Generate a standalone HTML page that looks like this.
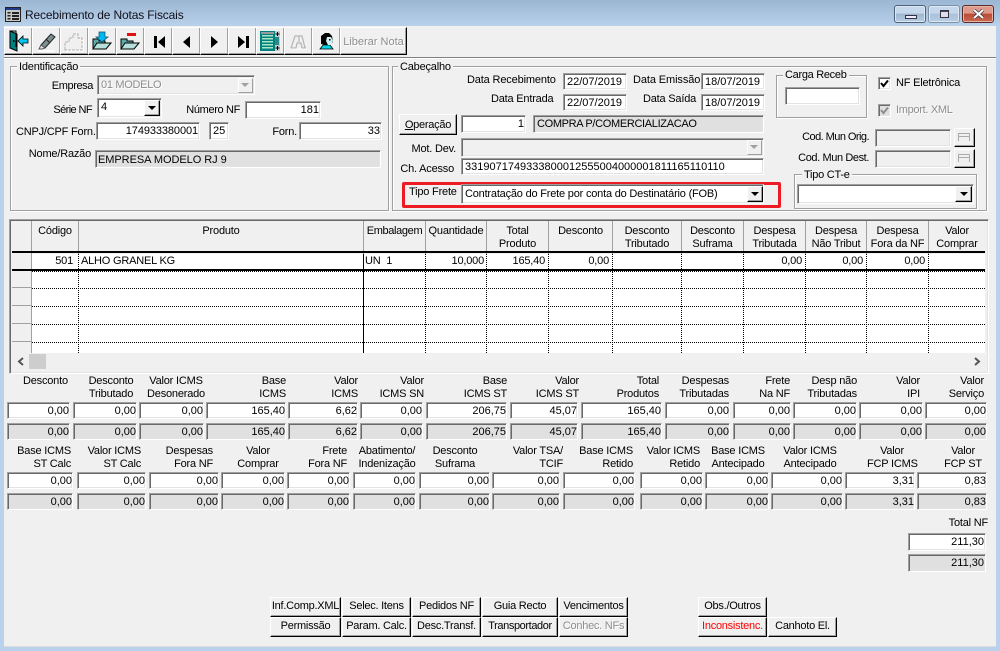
<!DOCTYPE html>
<html><head><meta charset="utf-8"><style>
html,body{margin:0;padding:0}
body{width:1000px;height:651px;position:relative;overflow:hidden;background:#b9d1ea;font-family:"Liberation Sans",sans-serif;font-size:11px;color:#000;letter-spacing:-.2px}
div,svg{position:absolute;box-sizing:border-box}
.t{white-space:nowrap;line-height:13px;margin-top:1px}
.r{text-align:right}.c{text-align:center}
.i,.g{white-space:nowrap;text-align:right;background:#fff;border:1px solid;border-color:#a0a0a0 #fff #fff #a0a0a0;box-shadow:inset 1px 1px 0 #696969,inset -1px -1px 0 #e3e3e3;padding:1px 0 0 2px;line-height:14px;overflow:hidden;letter-spacing:0}
.g{background:#e0e0e0}
.L{text-align:left;padding-left:3px}
.b{background:#f0f0f0;border:1px solid;border-color:#fff #000 #000 #fff;box-shadow:inset -1px -1px 0 #a0a0a0;text-align:center;line-height:17px;white-space:nowrap;letter-spacing:-.25px}
.gb{border:1px solid #a0a0a0;box-shadow:1px 1px 0 #fff,inset 1px 1px 0 #fff}
.lg{background:#f0f0f0;padding:0 2px}
.dis{color:#8d8d8d;text-shadow:1px 1px 0 #fff}
.tri{width:0;height:0;border-left:4px solid transparent;border-right:4px solid transparent;border-top:4px solid #000;left:3px;top:5px}
</style></head><body>
<div style="left:0;top:0;width:1000px;height:26px;background:linear-gradient(#9bb6d3,#b9d1ea)"></div>
<svg style="left:5px;top:7px" width="16" height="15" viewBox="0 0 16 15"><rect x=".5" y=".5" width="15" height="14" fill="#c8c8c8" stroke="#222"/><rect x="1" y="1" width="14" height="2" fill="#223a88"/><rect x="2.5" y="5" width="3" height="1.5" fill="#222"/><rect x="2.5" y="8" width="3" height="1.5" fill="#222"/><rect x="2.5" y="11" width="3" height="1.5" fill="#222"/><rect x="7" y="5" width="7" height="2" fill="#222"/><rect x="7" y="8" width="7" height="2" fill="#222"/><rect x="7" y="11" width="7" height="2" fill="#222"/></svg>
<div class="t" style="left:25px;top:8px;font-size:12px;color:#10101a;letter-spacing:-.15px">Recebimento de Notas Fiscais</div>
<div style="left:894px;top:5px;width:32px;height:18px;border:1px solid #4d6078;border-radius:3px;background:linear-gradient(#c5d7ea 45%,#9db6d0 50%,#b7cde3);box-shadow:inset 0 0 0 1px #dde8f3"><div style="left:10px;top:9px;width:12px;height:4px;background:#eef;border:1px solid #334"></div></div>
<div style="left:928px;top:5px;width:32px;height:18px;border:1px solid #7b92ab;border-radius:3px;background:linear-gradient(#c5d7ea 45%,#a9c1da 50%,#b7cde3);box-shadow:inset 0 0 0 1px #dde8f3"><div style="left:11px;top:4px;width:9px;height:8px;background:#dde;border:1px solid #334;box-shadow:inset 0 1px 0 #445"></div></div>
<div style="left:962px;top:5px;width:32px;height:18px;border:1px solid #5b2a22;border-radius:3px;background:linear-gradient(#dd9a8a 45%,#bb4a35 50%,#c96a52);box-shadow:inset 0 0 0 1px #e4b5a8"><svg style="left:9px;top:3px" width="13" height="10" viewBox="0 0 13 10"><path d="M2 1L11 9M11 1L2 9" stroke="#334" stroke-width="3.4"/><path d="M2 1L11 9M11 1L2 9" stroke="#fff" stroke-width="2"/></svg></div>

<div style="left:4px;top:26px;width:992px;height:620px;background:#f0f0f0"></div>
<div style="left:4px;top:57px;width:992px;height:2px;background:#808080;border-bottom:1px solid #fff"></div>
<div style="left:4px;top:646px;width:992px;height:1px;background:#dcdcdc"></div>

<div class="b" style="left:4px;top:27px;width:29px;height:28px"></div>
<div class="b" style="left:32px;top:27px;width:29px;height:28px"></div>
<div class="b" style="left:60px;top:27px;width:29px;height:28px"></div>
<div class="b" style="left:88px;top:27px;width:29px;height:28px"></div>
<div class="b" style="left:116px;top:27px;width:29px;height:28px"></div>
<div class="b" style="left:144px;top:27px;width:29px;height:28px"></div>
<div class="b" style="left:172px;top:27px;width:29px;height:28px"></div>
<div class="b" style="left:200px;top:27px;width:29px;height:28px"></div>
<div class="b" style="left:228px;top:27px;width:29px;height:28px"></div>
<div class="b" style="left:256px;top:27px;width:29px;height:28px"></div>
<div class="b" style="left:284px;top:27px;width:29px;height:28px"></div>
<div class="b" style="left:312px;top:27px;width:29px;height:28px"></div>
<div class="b dis" style="left:340px;top:27px;width:67px;height:28px;line-height:28px;letter-spacing:0">Liberar Nota</div>

<svg style="left:0;top:0" width="420" height="60">
<path d="M10 31L17 34V51L10 48Z" fill="#008080" stroke="#000"/><path d="M10 31H16V34" fill="none" stroke="#000"/><path d="M16 34V47" stroke="#000"/><rect x="13" y="40" width="1.5" height="2" fill="#000"/>
<path d="M18 41L23 36V39H28V43H23V46Z" fill="#00c8f0" stroke="#000" stroke-width=".8"/>
<path d="M41 45L51 34L55 37L45 48Z" fill="#7d8e8e" stroke="#222"/><path d="M46 39L50 43" stroke="#222"/><path d="M41 45L45 48L42 49H39Z" fill="#e8e8e8" stroke="#555"/><path d="M38 51H55" stroke="#fff" stroke-width="1.5"/>
<path d="M65 50V42H69V38H73V34H78V38H82V50Z" fill="none" stroke="#b0b0b0" stroke-dasharray="3 1"/><path d="M66 51H83V39" fill="none" stroke="#fff"/>
<path d="M93 49V39H99V41H105V49Z" fill="#5ea8a8" stroke="#000"/><path d="M93 49L97 43H111L106 49Z" fill="#b5e0dc" stroke="#000"/><path d="M99 32H105V37H108L102 42L96 37H99Z" fill="#00b8f0" stroke="#0a4a66" stroke-width=".7"/>
<path d="M121 49V39H127V41H133V49Z" fill="#5ea8a8" stroke="#000"/><path d="M121 49L125 43H139L134 49Z" fill="#b5e0dc" stroke="#000"/><rect x="127" y="33" width="9" height="3" fill="#e01010"/>
<rect x="154" y="36" width="3" height="12" fill="#000"/><path d="M165 36V48L158 42Z" fill="#000"/>
<path d="M190 36V48L183 42Z" fill="#000"/>
<path d="M211 36V48L218 42Z" fill="#000"/>
<path d="M238 36V48L245 42Z" fill="#000"/><rect x="246" y="36" width="3" height="12" fill="#000"/>
<rect x="260" y="31" width="20" height="20" fill="#008080"/><rect x="261" y="32" width="13" height="2" fill="#9a9a9a"/><g fill="#a8e8c0"><rect x="262" y="35" width="11" height="1.5"/><rect x="262" y="38" width="11" height="1.5"/><rect x="262" y="41" width="11" height="1.5"/><rect x="262" y="44" width="11" height="1.5"/><rect x="262" y="47" width="11" height="1.5"/></g><rect x="275" y="31" width="5" height="20" fill="#c8c8c8"/><rect x="275" y="37" width="4" height="8" fill="#2a8a8a"/><path d="M277.5 32V36M275.5 34H279.5M277.5 46V50M275.5 48H279.5" stroke="#000"/>
<path d="M291 48L295 36H299M305 48L302 36H299M299 36V42M291 48H296L297 43H301L302 48H306" fill="none" stroke="#b5b5b5" stroke-width="1.2"/><path d="M292 49H307" stroke="#fff"/>
<path d="M320 49L323 45H330L333 49Z" fill="#00d8e8" stroke="#000" stroke-width=".8"/><path d="M321 44V36L325 33H329L332 36L333 42L330 45H325Z" fill="#000"/><path d="M327 37H331L333 41L331 45H328L326 41Z" fill="#cfeff0"/><rect x="329" y="39" width="1.5" height="1.5" fill="#000"/>
</svg>

<!-- Identificacao -->
<div class="gb" style="left:10px;top:66px;width:379px;height:145px"></div>
<div class="t lg" style="left:17px;top:60px">Identificação</div>
<div class="t r" style="right:907px;top:79px;letter-spacing:-.4px">Empresa</div>
<div class="g L dis" style="left:97px;top:75px;width:158px;height:20px;background:#f0f0f0;line-height:16px;letter-spacing:-.3px">01 MODELO</div>
<div class="b" style="left:238px;top:78px;width:15px;height:15px;box-shadow:none;border-color:#fff #a0a0a0 #a0a0a0 #fff"><div class="tri" style="left:2px;top:4px;border-top-color:#a0a0a0"></div></div>
<div class="t r" style="right:908px;top:103px;letter-spacing:-.6px">Série NF</div>
<div class="i L" style="left:97px;top:98px;width:65px;height:20px;line-height:14px">4</div>
<div class="b" style="left:144px;top:100px;width:16px;height:16px"><div class="tri"></div></div>
<div class="t r" style="right:760px;top:103px;letter-spacing:-.35px">Número NF</div>
<div class="i" style="left:245px;top:101px;width:76px;height:18px;padding-right:1px">181</div>
<div class="t" style="left:16px;top:125px">CNPJ/CPF Forn.</div>
<div class="i" style="left:96px;top:122px;width:104px;height:18px;padding-right:1px;letter-spacing:-.1px">174933380001</div>
<div class="i L" style="left:209px;top:122px;width:20px;height:18px">25</div>
<div class="t r" style="right:703px;top:125px">Forn.</div>
<div class="i" style="left:299px;top:122px;width:83px;height:18px;padding-right:1px">33</div>
<div class="t r" style="right:909px;top:147px">Nome/Razão</div>
<div class="g L" style="left:95px;top:150px;width:286px;height:18px;padding-top:2px;padding-left:2px;letter-spacing:-.05px">EMPRESA MODELO RJ 9</div>

<!-- Cabecalho -->
<div class="gb" style="left:392px;top:66px;width:595px;height:145px"></div>
<div class="t lg" style="left:398px;top:60px">Cabeçalho</div>
<div class="t" style="left:467px;top:73px;letter-spacing:-.15px">Data Recebimento</div>
<div class="i L" style="left:563px;top:73px;width:64px;height:17px">22/07/2019</div>
<div class="t" style="left:633px;top:73px;letter-spacing:-.1px">Data Emissão</div>
<div class="i L" style="left:701px;top:73px;width:64px;height:17px">18/07/2019</div>
<div class="t" style="left:491px;top:92px">Data Entrada</div>
<div class="i L" style="left:563px;top:94px;width:64px;height:17px">22/07/2019</div>
<div class="t" style="left:643px;top:92px">Data Saída</div>
<div class="i L" style="left:701px;top:94px;width:64px;height:17px">18/07/2019</div>
<div class="b" style="left:399px;top:114px;width:58px;height:21px;line-height:20px"><u>O</u>peração</div>
<div class="i" style="left:461px;top:115px;width:65px;height:18px;padding-right:1px">1</div>
<div class="g L" style="left:533px;top:115px;width:231px;height:18px;letter-spacing:-.33px">COMPRA P/COMERCIALIZACAO</div>
<div class="t r" style="right:544px;top:142px">Mot. Dev.</div>
<div class="i" style="left:461px;top:138px;width:303px;height:19px;background:#f0f0f0"></div>
<div class="b" style="left:747px;top:140px;width:15px;height:15px;box-shadow:none;border-color:#fff #a0a0a0 #a0a0a0 #fff"><div class="tri" style="left:2px;top:4px;border-top-color:#a0a0a0"></div></div>
<div class="t r" style="right:546px;top:162px">Ch. Acesso</div>
<div class="i L" style="left:461px;top:158px;width:303px;height:17px">3319071749333800012555004000001811165110110</div>
<div style="left:402px;top:182px;width:379px;height:26px;border:3px solid #ed1c24;border-radius:2px"></div>
<div class="t" style="left:409px;top:185px">Tipo Frete</div>
<div class="i L" style="left:461px;top:184px;width:303px;height:20px;line-height:15px;padding-top:2px;letter-spacing:-.2px">Contratação do Frete por conta do Destinatário (FOB)</div>
<div class="b" style="left:747px;top:186px;width:16px;height:16px"><div class="tri"></div></div>

<div class="gb" style="left:776px;top:75px;width:91px;height:43px"></div>
<div class="t lg" style="left:783px;top:68px;letter-spacing:-.3px">Carga Receb</div>
<div class="i" style="left:785px;top:87px;width:75px;height:18px"></div>
<div class="i" style="left:878px;top:77px;width:13px;height:13px"></div>
<svg style="left:878px;top:77px" width="13" height="13"><path d="M3 6L5.5 9L10 3.5" fill="none" stroke="#000" stroke-width="2"/></svg>
<div class="t" style="left:896px;top:76px">NF Eletrônica</div>
<div class="i" style="left:878px;top:104px;width:13px;height:13px;background:#e0e0e0"></div>
<svg style="left:878px;top:104px" width="13" height="13"><path d="M3 6L5.5 9L10 3.5" fill="none" stroke="#8d8d8d" stroke-width="2"/></svg>
<div class="t dis" style="left:896px;top:103px;letter-spacing:-.3px">Import. XML</div>
<div class="t r" style="right:131px;top:130px;letter-spacing:-.55px">Cod. Mun Orig.</div>
<div class="i" style="left:875px;top:129px;width:76px;height:18px;background:#f0f0f0"></div>
<div class="b" style="left:954px;top:128px;width:21px;height:19px"><div style="left:3px;top:4px;width:12px;height:8px;border:1px solid #aaa;border-bottom:0"></div><div style="left:3px;top:7px;width:12px;height:1px;background:#aaa"></div></div>
<div class="t r" style="right:131px;top:151px;letter-spacing:-.4px">Cod. Mun Dest.</div>
<div class="i" style="left:875px;top:150px;width:76px;height:18px;background:#f0f0f0"></div>
<div class="b" style="left:954px;top:149px;width:21px;height:19px"><div style="left:3px;top:4px;width:12px;height:8px;border:1px solid #aaa;border-bottom:0"></div><div style="left:3px;top:7px;width:12px;height:1px;background:#aaa"></div></div>
<div class="gb" style="left:794px;top:174px;width:183px;height:35px"></div>
<div class="t lg" style="left:802px;top:168px;letter-spacing:-.25px">Tipo CT-e</div>
<div class="i" style="left:797px;top:184px;width:177px;height:20px"></div>
<div class="b" style="left:955px;top:186px;width:17px;height:16px"><div class="tri" style="left:4px"></div></div>

<!-- Grid -->
<div style="left:9px;top:219px;width:980px;height:155px;background:#f0f0f0;border:1px solid #a0a0a0;border-right-color:#fff;border-bottom-color:#fff;box-shadow:inset 1px 1px 0 #696969,inset -1px -1px 0 #e3e3e3"></div>
<div style="left:32px;top:254px;width:953px;height:99px;background:#fff"></div>
<svg style="left:0;top:0" width="1000" height="380">
<g stroke="#a0a0a0"><path d="M31.5 221V353M78.5 221V254M363.5 221V254M425.5 221V254M486.5 221V254M548.5 221V254M612.5 221V254M681.5 221V254M743.5 221V254M805.5 221V254M866.5 221V254M928.5 221V254"/><path d="M12 287.5H31M12 305.5H31M12 323.5H31M12 341.5H31"/></g>
<g fill="#000"><rect x="12" y="251" width="973" height="2"/><rect x="12" y="269" width="973" height="2"/></g>
<g stroke="#000" stroke-dasharray="1 1"><path d="M32 271.5H985M32 288.5H985M32 306.5H985M32 324.5H985M32 342.5H985"/><path d="M78.5 254V353M425.5 254V353M486.5 254V353M548.5 254V353M612.5 254V353M681.5 254V353M743.5 254V353M805.5 254V353M866.5 254V353M928.5 254V353"/></g>
<path d="M363.5 254V353" stroke="#000"/>
<rect x="29" y="354" width="17" height="15" fill="#cdcdcd"/>
<path d="M23 358L19 361.5L23 365" fill="none" stroke="#555" stroke-width="2"/>
<path d="M975 358L979 361.5L975 365" fill="none" stroke="#555" stroke-width="2"/>
</svg>
<div class="t c" style="left:32px;width:46px;top:224px">Código</div>
<div class="t c" style="left:79px;width:284px;top:224px">Produto</div>
<div class="t c" style="left:364px;width:61px;top:224px;letter-spacing:-.35px">Embalagem</div>
<div class="t c" style="left:426px;width:60px;top:224px">Quantidade</div>
<div class="t c" style="left:487px;width:61px;top:224px">Total<br>Produto</div>
<div class="t c" style="left:549px;width:63px;top:224px">Desconto</div>
<div class="t c" style="left:613px;width:68px;top:224px">Desconto<br>Tributado</div>
<div class="t c" style="left:682px;width:61px;top:224px">Desconto<br>Suframa</div>
<div class="t c" style="left:744px;width:61px;top:224px">Despesa<br>Tributada</div>
<div class="t c" style="left:806px;width:60px;top:224px">Despesa<br>Não Tribut</div>
<div class="t c" style="left:867px;width:61px;top:224px">Despesa<br>Fora da NF</div>
<div class="t c" style="left:929px;width:56px;top:224px">Valor<br>Comprar</div>
<div class="t r" style="right:927px;top:254px">501</div>
<div class="t" style="left:81px;top:254px">ALHO GRANEL KG</div>
<div class="t" style="left:365px;top:254px">UN&nbsp; 1</div>
<div class="t r" style="right:516px;top:254px">10,000</div>
<div class="t r" style="right:455px;top:254px">165,40</div>
<div class="t r" style="right:391px;top:254px">0,00</div>
<div class="t r" style="right:198px;top:254px">0,00</div>
<div class="t r" style="right:137px;top:254px">0,00</div>
<div class="t r" style="right:75px;top:254px">0,00</div>

<!-- Row 1 labels -->
<div class="t" style="left:23px;top:374px">Desconto</div>
<div class="t c" style="left:81px;width:60px;top:374px">Desconto<br>Tributado</div>
<div class="t c" style="left:146px;width:60px;top:374px">Valor ICMS<br>Desonerado</div>
<div class="t r" style="right:714px;top:374px">Base<br>ICMS</div>
<div class="t r" style="right:642px;top:374px">Valor<br>ICMS</div>
<div class="t r" style="right:576px;top:374px">Valor<br>ICMS SN</div>
<div class="t r" style="right:493px;top:374px">Base<br>ICMS ST</div>
<div class="t r" style="right:421px;top:374px">Valor<br>ICMS ST</div>
<div class="t r" style="right:341px;top:374px">Total<br>Produtos</div>
<div class="t r" style="right:271px;top:374px">Despesas<br>Tributadas</div>
<div class="t r" style="right:210px;top:374px">Frete<br>Na NF</div>
<div class="t r" style="right:143px;top:374px">Desp não<br>Tributadas</div>
<div class="t r" style="right:80px;top:374px">Valor<br>IPI</div>
<div class="t r" style="right:16px;top:374px">Valor<br>Serviço</div>

<div class="i" style="left:7px;top:402px;width:63px;height:17px">0,00</div>
<div class="i" style="left:73px;top:402px;width:64px;height:17px">0,00</div>
<div class="i" style="left:139px;top:402px;width:65px;height:17px">0,00</div>
<div class="i" style="left:206px;top:402px;width:80px;height:17px">165,40</div>
<div class="i" style="left:288px;top:402px;width:70px;height:17px">6,62</div>
<div class="i" style="left:360px;top:402px;width:63px;height:17px">0,00</div>
<div class="i" style="left:426px;top:402px;width:81px;height:17px">206,75</div>
<div class="i" style="left:510px;top:402px;width:68px;height:17px">45,07</div>
<div class="i" style="left:581px;top:402px;width:81px;height:17px">165,40</div>
<div class="i" style="left:665px;top:402px;width:65px;height:17px">0,00</div>
<div class="i" style="left:733px;top:402px;width:58px;height:17px">0,00</div>
<div class="i" style="left:793px;top:402px;width:64px;height:17px">0,00</div>
<div class="i" style="left:859px;top:402px;width:64px;height:17px">0,00</div>
<div class="i" style="left:925px;top:402px;width:62px;height:17px">0,00</div>

<div class="g" style="left:7px;top:423px;width:63px;height:17px">0,00</div>
<div class="g" style="left:73px;top:423px;width:64px;height:17px">0,00</div>
<div class="g" style="left:139px;top:423px;width:65px;height:17px">0,00</div>
<div class="g" style="left:206px;top:423px;width:80px;height:17px">165,40</div>
<div class="g" style="left:288px;top:423px;width:70px;height:17px">6,62</div>
<div class="g" style="left:360px;top:423px;width:63px;height:17px">0,00</div>
<div class="g" style="left:426px;top:423px;width:81px;height:17px">206,75</div>
<div class="g" style="left:510px;top:423px;width:68px;height:17px">45,07</div>
<div class="g" style="left:581px;top:423px;width:81px;height:17px">165,40</div>
<div class="g" style="left:665px;top:423px;width:65px;height:17px">0,00</div>
<div class="g" style="left:733px;top:423px;width:58px;height:17px">0,00</div>
<div class="g" style="left:793px;top:423px;width:64px;height:17px">0,00</div>
<div class="g" style="left:859px;top:423px;width:64px;height:17px">0,00</div>
<div class="g" style="left:925px;top:423px;width:62px;height:17px">0,00</div>

<!-- Row 2 labels -->
<div class="t r" style="right:929px;top:444px">Base ICMS<br>ST Calc</div>
<div class="t r" style="right:859px;top:444px">Valor ICMS<br>ST Calc</div>
<div class="t r" style="right:787px;top:444px">Despesas<br>Fora NF</div>
<div class="t c" style="left:228px;width:60px;top:444px">Valor<br>Comprar</div>
<div class="t r" style="right:653px;top:444px">Frete<br>Fora NF</div>
<div class="t c" style="left:357px;width:60px;top:444px">Abatimento/<br>Indenização</div>
<div class="t c" style="left:428px;width:54px;top:444px">Desconto<br>Suframa</div>
<div class="t r" style="right:437px;top:444px">Valor TSA/<br>TCIF</div>
<div class="t r" style="right:367px;top:444px">Base ICMS<br>Retido</div>
<div class="t r" style="right:300px;top:444px">Valor ICMS<br>Retido</div>
<div class="t c" style="left:708px;width:60px;top:444px">Base ICMS<br>Antecipado</div>
<div class="t c" style="left:780px;width:60px;top:444px">Valor ICMS<br>Antecipado</div>
<div class="t c" style="left:867px;width:50px;top:444px">Valor<br>FCP ICMS</div>
<div class="t c" style="left:938px;width:50px;top:444px">Valor<br>FCP ST</div>

<div class="i" style="left:7px;top:472px;width:66px;height:17px">0,00</div>
<div class="i" style="left:77px;top:472px;width:69px;height:17px">0,00</div>
<div class="i" style="left:149px;top:472px;width:70px;height:17px">0,00</div>
<div class="i" style="left:221px;top:472px;width:64px;height:17px">0,00</div>
<div class="i" style="left:287px;top:472px;width:63px;height:17px">0,00</div>
<div class="i" style="left:353px;top:472px;width:63px;height:17px">0,00</div>
<div class="i" style="left:419px;top:472px;width:71px;height:17px">0,00</div>
<div class="i" style="left:492px;top:472px;width:68px;height:17px">0,00</div>
<div class="i" style="left:563px;top:472px;width:72px;height:17px">0,00</div>
<div class="i" style="left:640px;top:472px;width:63px;height:17px">0,00</div>
<div class="i" style="left:705px;top:472px;width:64px;height:17px">0,00</div>
<div class="i" style="left:771px;top:472px;width:72px;height:17px">0,00</div>
<div class="i" style="left:845px;top:472px;width:70px;height:17px">3,31</div>
<div class="i" style="left:917px;top:472px;width:70px;height:17px">0,83</div>

<div class="g" style="left:7px;top:493px;width:66px;height:17px">0,00</div>
<div class="g" style="left:77px;top:493px;width:69px;height:17px">0,00</div>
<div class="g" style="left:149px;top:493px;width:70px;height:17px">0,00</div>
<div class="g" style="left:221px;top:493px;width:64px;height:17px">0,00</div>
<div class="g" style="left:287px;top:493px;width:63px;height:17px">0,00</div>
<div class="g" style="left:353px;top:493px;width:63px;height:17px">0,00</div>
<div class="g" style="left:419px;top:493px;width:71px;height:17px">0,00</div>
<div class="g" style="left:492px;top:493px;width:68px;height:17px">0,00</div>
<div class="g" style="left:563px;top:493px;width:72px;height:17px">0,00</div>
<div class="g" style="left:640px;top:493px;width:63px;height:17px">0,00</div>
<div class="g" style="left:705px;top:493px;width:64px;height:17px">0,00</div>
<div class="g" style="left:771px;top:493px;width:72px;height:17px">0,00</div>
<div class="g" style="left:845px;top:493px;width:70px;height:17px">3,31</div>
<div class="g" style="left:917px;top:493px;width:70px;height:17px">0,83</div>

<div class="t r" style="right:12px;top:516px">Total NF</div>
<div class="i" style="left:908px;top:533px;width:78px;height:18px;padding-right:1px">211,30</div>
<div class="g" style="left:908px;top:554px;width:78px;height:18px;padding-right:1px">211,30</div>

<!-- Bottom buttons -->
<div class="b" style="left:270px;top:597px;width:71px;height:20px">Inf.Comp.XML</div>
<div class="b" style="left:342px;top:597px;width:69px;height:20px">Selec. Itens</div>
<div class="b" style="left:412px;top:597px;width:69px;height:20px">Pedidos NF</div>
<div class="b" style="left:482px;top:597px;width:76px;height:20px">Guia Recto</div>
<div class="b" style="left:559px;top:597px;width:69px;height:20px">Vencimentos</div>
<div class="b" style="left:698px;top:597px;width:69px;height:20px">Obs./Outros</div>
<div class="b" style="left:270px;top:617px;width:71px;height:20px">Permissão</div>
<div class="b" style="left:342px;top:617px;width:69px;height:20px">Param. Calc.</div>
<div class="b" style="left:412px;top:617px;width:69px;height:20px">Desc.Transf.</div>
<div class="b" style="left:482px;top:617px;width:76px;height:20px;letter-spacing:-.4px">Transportador</div>
<div class="b dis" style="left:559px;top:617px;width:69px;height:20px">Conhec. NFs</div>
<div class="b" style="left:698px;top:617px;width:69px;height:20px;color:#f00">Inconsistenc.</div>
<div class="b" style="left:768px;top:617px;width:69px;height:20px">Canhoto El.</div>
</body></html>
